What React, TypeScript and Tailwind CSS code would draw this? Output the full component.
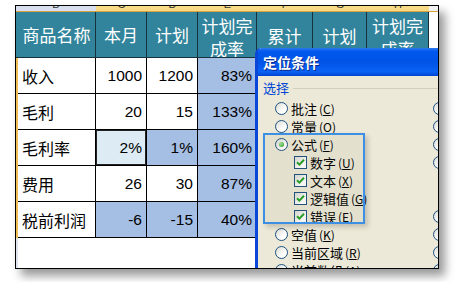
import React from "react";

const cjk = "font-['Noto_Sans_CJK_SC',sans-serif]";
const num = "font-['Liberation_Sans','Noto_Sans_CJK_SC',sans-serif]";

const cols = [
  { w: "w-[51px]", l: "C" },
  { w: "w-[51px]", l: "D" },
  { w: "w-[59px]", l: "E" },
  { w: "w-[56px]", l: "F" },
  { w: "w-[54px]", l: "G" },
  { w: "w-[62px]", l: "H" },
];

type Cell = { v: string; bg?: "blue" | "active" };
const rows: { name: string; cells: Cell[] }[] = [
  { name: "收入", cells: [{ v: "1000" }, { v: "1200" }, { v: "83%", bg: "blue" }] },
  { name: "毛利", cells: [{ v: "20" }, { v: "15" }, { v: "133%", bg: "blue" }] },
  { name: "毛利率", cells: [{ v: "2%", bg: "active" }, { v: "1%", bg: "blue" }, { v: "160%", bg: "blue" }] },
  { name: "费用", cells: [{ v: "26" }, { v: "30" }, { v: "87%", bg: "blue" }] },
  { name: "税前利润", cells: [{ v: "-6", bg: "blue" }, { v: "-15", bg: "blue" }, { v: "40%", bg: "blue" }] },
];

function Radio({ on = false }: { on?: boolean }) {
  return (
    <span className="relative flex h-[13px] w-[13px] shrink-0 items-center justify-center rounded-full border border-[#1c5180] bg-[linear-gradient(135deg,#dcdcd5,#ffffff_70%)]">
      {on && (
        <span className="h-[5px] w-[5px] rounded-full bg-[radial-gradient(circle_at_35%_35%,#a8e6a0,#21a121)]" />
      )}
    </span>
  );
}

function Check() {
  return (
    <span className="flex h-[13px] w-[13px] shrink-0 items-center justify-center border border-[#1c5180] bg-[linear-gradient(135deg,#dcdcd5,#ffffff_70%)]">
      <svg width="9" height="9" viewBox="0 0 9 9">
        <path d="M1 4.2 L3.4 6.6 L8 1.8" fill="none" stroke="#21a121" strokeWidth="2" />
      </svg>
    </span>
  );
}

function Label({ t, k }: { t: string; k: string }) {
  return (
    <span className={`${cjk} text-[13px] leading-none text-black whitespace-nowrap`}>
      {t}
      <span className="ml-[2px] text-[12px]">
        (<span className="underline">{k}</span>)
      </span>
    </span>
  );
}

const items: { kind: "radio" | "check"; t: string; k: string; on?: boolean; right: boolean }[] = [
  { kind: "radio", t: "批注", k: "C", right: true },
  { kind: "radio", t: "常量", k: "O", right: true },
  { kind: "radio", t: "公式", k: "F", on: true, right: true },
  { kind: "check", t: "数字", k: "U", right: true },
  { kind: "check", t: "文本", k: "X", right: false },
  { kind: "check", t: "逻辑值", k: "G", right: false },
  { kind: "check", t: "错误", k: "E", right: true },
  { kind: "radio", t: "空值", k: "K", right: true },
  { kind: "radio", t: "当前区域", k: "R", right: true },
  { kind: "radio", t: "当前数组", k: "A", right: true },
];

export default function App() {
  return (
    <div className="h-[282px] w-[462px] bg-white pl-[15px] pt-[5px]">
      <div className="relative h-[264px] w-[424px] overflow-hidden border border-black bg-white shadow-[6px_7px_9px_rgba(0,0,0,0.4)]">
        {/* column letter strip */}
        <div className="flex h-[6px] border-b border-[#d9a23c]">
          <div className="flex w-[80px] justify-center overflow-hidden bg-[#d7dfee]">
            <span className={`${num} -mt-[7px] text-[11px] leading-[11px] text-[#333]`}>B</span>
          </div>
          {cols.map((c) => (
            <div key={c.l} className={`${c.w} flex justify-center overflow-hidden bg-[#f7d986]`}>
              <span className={`${num} -mt-[7px] text-[11px] leading-[11px] text-[#333]`}>{c.l}</span>
            </div>
          ))}
          <div className="flex-1 bg-[#f2f2f2]" />
        </div>

        {/* header */}
        <div className={`${cjk} flex h-[46px] text-[17px] leading-[22px] text-white`}>
          <div className="w-[2px] border-b border-[#17323a] bg-[#31849b]" />
          <div className="flex w-[78px] items-center justify-center border-r border-b border-[#17323a] bg-[#31849b]">商品名称</div>
          <div className="flex w-[51px] items-center justify-center border-r border-b border-[#17323a] bg-[#31849b]">本月</div>
          <div className="flex w-[51px] items-center justify-center border-r border-b border-[#17323a] bg-[#31849b]">计划</div>
          <div className="flex w-[59px] flex-col items-center overflow-hidden border-r border-b border-[#17323a] bg-[#31849b] pt-[2px] leading-[23px]">
            <span>计划完</span>
            <span>成率</span>
          </div>
          <div className="flex w-[56px] items-center justify-center border-r border-b border-[#17323a] bg-[#31849b] pt-[3px]">累计</div>
          <div className="flex w-[54px] items-center justify-center border-r border-b border-[#17323a] bg-[#31849b] pt-[3px]">计划</div>
          <div className="flex w-[62px] flex-col items-center overflow-hidden border-r border-b border-[#17323a] bg-[#31849b] pt-[2px] leading-[23px]">
            <span>计划完</span>
            <span>成率</span>
          </div>
          <div className="flex-1 bg-white" />
        </div>

        {/* body */}
        {rows.map((r) => (
          <div key={r.name} className="flex h-[36px]">
            <div className="w-[2px] bg-[#efbf55]" />
            <div className={`${cjk} flex w-[78px] items-center border-r border-b border-black pl-[4px] text-[16px] text-black`}>
              {r.name}
            </div>
            {r.cells.map((c, i) => (
              <div
                key={i}
                className={`${num} flex ${i === 2 ? "w-[59px]" : "w-[51px]"} items-center justify-end border-r border-b border-black pr-[4px] text-[15.5px] text-black ${
                  c.bg === "blue" ? "bg-[#a5bee3]" : c.bg === "active" ? "bg-[#dcebf4] shadow-[inset_0_0_0_1px_#222]" : "bg-white"
                }`}
              >
                {c.v}
              </div>
            ))}
            <div className="flex-1 bg-white" />
          </div>
        ))}
        <div className="flex h-[30px]">
          <div className="w-[2px] bg-[#dfe3f0]" />
          <div className="flex-1" />
        </div>

        {/* dialog */}
        <div className="absolute left-[239px] top-[42px] h-[240px] w-[210px] rounded-tl-[6px] border-l-[3px] border-[#0a46d8] bg-[#ece9d8]">
          <div className="flex h-[28px] items-center rounded-tl-[4px] bg-[linear-gradient(#2d7bf0,#0058ee_12%,#0054e6_50%,#0a62f4_85%,#0043d0)] pl-[5px]">
            <span className={`${cjk} text-[14px] font-bold text-white [text-shadow:1px_1px_0_#0a2a8a]`}>定位条件</span>
          </div>
          <div className="relative pl-[5px] pt-[3px]">
            <div className="flex items-center gap-[4px]">
              <span className={`${cjk} text-[13px] leading-[18px] text-[#0046d5]`}>选择</span>
              <div className="h-px flex-1 bg-[#d0d0bf]" />
            </div>
            <div className="pt-[2px] pl-[12px]">
              {items.map((it) => (
                <div key={it.t} className="flex h-[18px] items-center">
                  <div className={`flex w-[158px] items-center ${it.kind === "check" ? "gap-[3px] pl-[19px]" : "gap-[3px]"}`}>
                    {it.kind === "radio" ? <Radio on={it.on} /> : <Check />}
                    <Label t={it.t} k={it.k} />
                  </div>
                  {it.right && <Radio />}
                </div>
              ))}
            </div>
            {/* annotation highlight */}
            <div className="absolute left-[5px] top-[57px] h-[91px] w-[102px] border-2 border-[#3d8fe3] bg-[rgba(120,110,80,0.07)] shadow-[3px_3px_5px_rgba(0,0,0,0.18)]" />
          </div>
        </div>
      </div>
    </div>
  );
}
